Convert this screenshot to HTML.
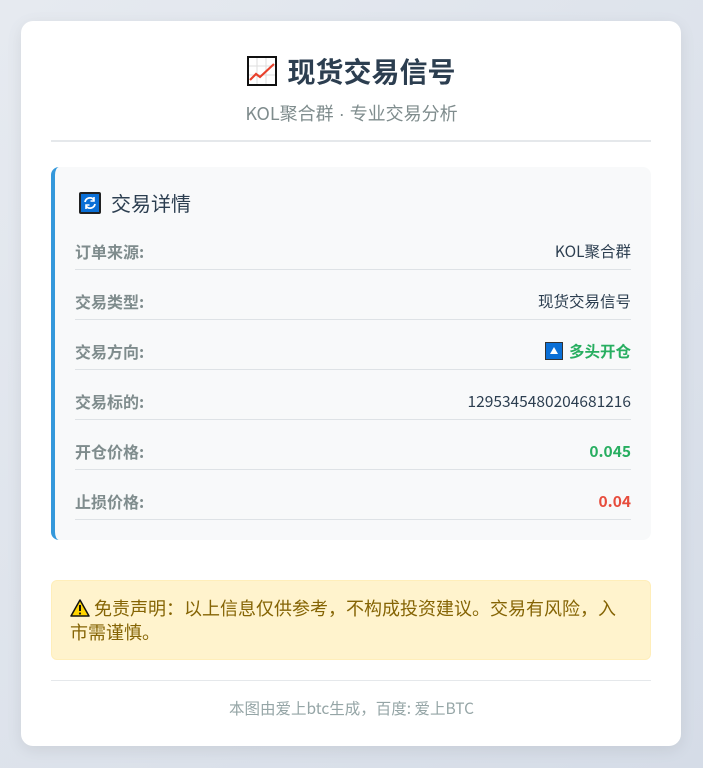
<!DOCTYPE html>
<html><head><meta charset="utf-8"><style>
*{margin:0;padding:0;box-sizing:border-box}
body{width:703px;height:768px;background:linear-gradient(135deg,#e6eaf0,#d5dce7);font-family:"Noto Sans CJK SC","Liberation Sans",sans-serif;position:relative;overflow:hidden}
.card{position:absolute;left:21px;top:21px;width:660px;height:725px;background:#fff;border-radius:12px;box-shadow:0 4px 16px rgba(0,0,0,.08)}
.title{position:absolute;left:0;right:0;top:52px;text-align:center;font-size:28px;font-weight:bold;color:#2c3e50;line-height:38px}
.sub{position:absolute;left:0;right:0;top:100px;text-align:center;font-size:18px;color:#7f8c8d;line-height:26px}
.hr{position:absolute;left:51px;width:600px;height:2px;background:#e5e8eb}
.box{position:absolute;left:51px;top:167px;width:600px;height:373px;background:#f8f9fa;border-left:4px solid #3498db;border-radius:8px}
.h{position:absolute;left:24px;top:21px;font-size:20px;color:#2c3e50;line-height:30px;display:flex;align-items:center}
.ico{display:inline-block;width:22px;height:22px;background:#0a6fd6;border:2px solid #222;border-radius:2px;margin-right:10px;position:relative}
.row{position:absolute;left:20px;width:556px;height:50px;border-bottom:1px solid #dee2e6;font-size:15.5px;line-height:20px}
.row .l{position:absolute;left:0;top:21px;font-weight:bold;color:#7f8c8d;font-size:16px}
.row .r{position:absolute;right:0;top:21px;color:#2c3e50}
.warn{position:absolute;left:51px;top:580px;width:600px;height:80px;background:#fff3cd;border:1px solid #ffeeba;border-radius:6px;padding:15px 25px 15px 18px;font-size:18px;line-height:24px;color:#856404}
.foot{position:absolute;left:0;right:0;top:697px;text-align:center;font-size:15.5px;color:#95a5a6}
</style></head><body>
<div class="card"></div>
<div class="title"><svg width="30" height="30" viewBox="0 0 30 30" style="vertical-align:-4px;margin-right:10px"><rect x="1" y="1" width="28" height="28" fill="#fff" stroke="#111" stroke-width="2"/><path d="M10 2V28M19 2V28M2 10H28M2 19H28" stroke="#ddd" stroke-width="1"/><path d="M3 24L9 18L13 21L27 8" stroke="#e8412c" stroke-width="2.2" fill="none"/></svg>现货交易信号</div>
<div class="sub">KOL聚合群<span style="font-family:'Liberation Sans'"> · </span>专业交易分析</div>
<div class="hr" style="top:140px"></div>
<div class="box">
<div class="h"><span class="ico"><svg width="18" height="18" viewBox="0 0 18 18" style="position:absolute;left:0;top:0"><path d="M4 8A5 5 0 0 1 13 6M14 10A5 5 0 0 1 5 12" stroke="#fff" stroke-width="1.8" fill="none"/><path d="M13 3V7H9.5" stroke="#fff" stroke-width="1.6" fill="none"/><path d="M5 15V11H8.5" stroke="#fff" stroke-width="1.6" fill="none"/></svg></span>交易详情</div>
<div class="row" style="top:53px"><span class="l">订单来源:</span><span class="r">KOL聚合群</span></div>
<div class="row" style="top:103px"><span class="l">交易类型:</span><span class="r">现货交易信号</span></div>
<div class="row" style="top:153px"><span class="l">交易方向:</span><span class="r" style="color:#27ae60;font-weight:bold"><span style="display:inline-block;width:18px;height:18px;background:#0a6fd6;border:1.5px solid #333;vertical-align:-3px;margin-right:6px;position:relative"><span style="position:absolute;left:4px;top:4px;border-left:4px solid transparent;border-right:4px solid transparent;border-bottom:7px solid #fff"></span></span>多头开仓</span></div>
<div class="row" style="top:203px"><span class="l">交易标的:</span><span class="r">1295345480204681216</span></div>
<div class="row" style="top:253px"><span class="l">开仓价格:</span><span class="r" style="color:#27ae60;font-weight:bold">0.045</span></div>
<div class="row" style="top:303px"><span class="l">止损价格:</span><span class="r" style="color:#e74c3c;font-weight:bold">0.04</span></div>
</div>
<div class="warn"><svg width="20" height="18" viewBox="0 0 20 18" style="vertical-align:-2px"><path d="M10 1L19 17H1Z" fill="#ffd400" stroke="#111" stroke-width="1.5" stroke-linejoin="round"/><path d="M10 6V12" stroke="#111" stroke-width="2"/><circle cx="10" cy="14.5" r="1.1" fill="#111"/></svg> 免责声明：以上信息仅供参考，不构成投资建议。交易有风险，入市需谨慎。</div>
<div class="hr" style="top:680px;height:1px"></div>
<div class="foot">本图由爱上btc生成，百度: 爱上BTC</div>
</body></html>
